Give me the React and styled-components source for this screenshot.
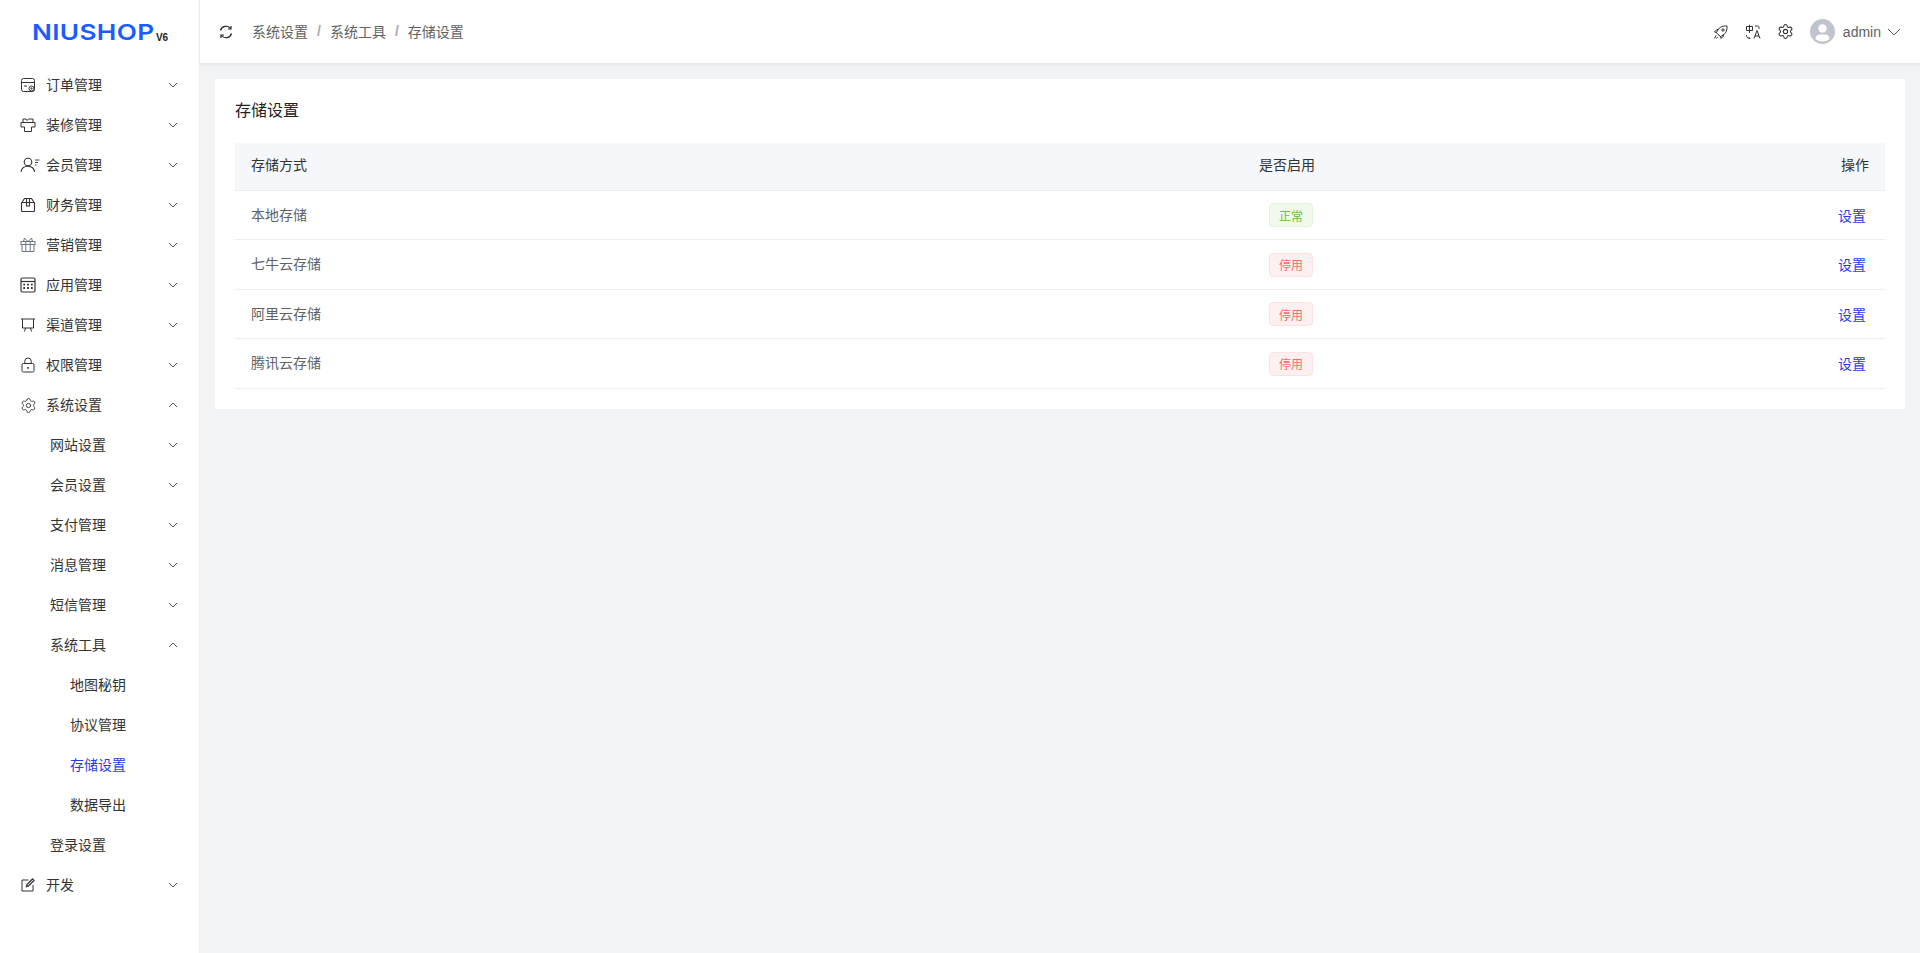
import React from 'react'
import styled, { createGlobalStyle } from 'styled-components'
import { Settings } from 'lucide-react'

const GlobalStyle = createGlobalStyle`
  html, body {
    margin: 0;
    padding: 0;
    height: 100%;
    background: #f2f3f5;
    font-family: "Liberation Sans", "Noto Sans CJK SC", sans-serif;
    font-size: 14px;
  }
`

const Svg = ({ size = 16, children, ...rest }) => (
  <svg width={size} height={size} viewBox="0 0 16 16" fill="none" stroke="currentColor" strokeWidth="1" {...rest}>
    {children}
  </svg>
)

const OrderIcon = () => (
  <Svg>
    <rect x="1.500" y="1.500" width="13" height="13" rx="2" />
    <path d="M1.500 5.500h13M4 9h3" />
    <circle cx="11.500" cy="11.500" r="2.500" fill="#fff" />
    <circle cx="11.500" cy="11.500" r=".7" />
  </Svg>
)
const DecorateIcon = () => (
  <Svg>
    <path d="M3 5.500V2h3l1 1.500L8.500 2H13v3.500" />
    <path d="M1 5.500h14V10h-3.500v4.500h-7V10H1z" strokeLinejoin="round" />
  </Svg>
)
const MemberIcon = () => (
  <svg width="20" height="16" viewBox="0 0 20 16" fill="none" stroke="currentColor" strokeWidth="1.100">
    <circle cx="8" cy="5" r="3.800" />
    <path d="M1 15c.5-3.600 3.300-5.800 7-5.800 1.800 0 3.500.6 4.800 1.800.9.900 1.500 2.300 1.800 4" />
    <path d="M15 3h4.500M15 5.500h3M15 8h1.500" strokeWidth=".9" />
  </svg>
)
const FinanceIcon = () => (
  <Svg strokeWidth="1.100">
    <rect x="1.500" y="5.500" width="13" height="9" rx="1" />
    <path d="M1.500 6 4.500 1.500h7L14.500 6M6.500 1.500V9h3V1.500" />
  </Svg>
)
const GiftIcon = () => (
  <GiftSvg>
    <rect x="1" y="4.500" width="14" height="3" />
    <path d="M2 7.500v7h12v-7M5.800 4.500v10M10.200 4.500v10M8 4.500 4.500 1 3.500 4.500M8 4.500 11.500 1l1 3.500" />
  </GiftSvg>
)
const AppIcon = () => (
  <Svg strokeWidth="1.200">
    <rect x="1" y="1" width="14" height="14" rx="1.500" />
    <path d="M1 4.500h14" />
    <path d="M3.300 7.700h1.800M7.100 7.700h1.800M10.900 7.700h1.800M3.300 11h1.800M7.100 11h1.800M10.900 11h1.800" strokeWidth="1.800" />
  </Svg>
)
const ChannelIcon = () => (
  <Svg>
    <path d="M.8 2h14.400M2.500 2v9h11V2M5.500 11l-1 3.500M10.500 11l1 3.500" />
  </Svg>
)
const LockIcon = () => (
  <Svg>
    <rect x="2" y="6.500" width="12" height="8.500" rx="1.500" />
    <path d="M4.800 6.500V4.200a3.200 3.200 0 0 1 6.400 0v2.300" />
    <path d="M8 10v1.800" strokeWidth="1.600" />
  </Svg>
)
const EditIcon = () => (
  <Svg>
    <path d="M13 8v6H2V3h6.500" />
    <path d="M6.500 9.500 7 7.500 12.500 2l1.500 1.500L8.500 9z" strokeWidth="1.300" />
  </Svg>
)
const RefreshIcon = () => (
  <Svg strokeWidth="1.200">
    <path d="M2.500 6.500A5.700 5.700 0 0 1 12.500 4.500M13.500 9.500A5.700 5.700 0 0 1 3.500 11.500" />
    <path d="M13 2v3h-3M3 14v-3h3" />
  </Svg>
)
const RocketIcon = () => (
  <Svg>
    <path d="M5 10.500 3.500 8.500C5 4 9 1.500 14 2c.5 5-2 9-6.500 10.500zM3.500 8.500 1.500 8 4 5.500l2 .2M7.500 12.500l.5 2 2.500-2.500-.2-2" />
    <circle cx="10" cy="6" r="1.200" />
    <path d="M3 11.500 1.500 14.500M4.500 13l-1 1.500" />
  </Svg>
)
const LangIcon = () => (
  <Svg>
    <path d="M1.500 2.500h6v4h-6zM4.500.8v8M1.500 11c0 2 1 3.500 3.500 3.500M3.500 13l1.500 1.500" />
    <path d="M9 14.500 12 6.500l3 8M10 12h4M10 2h2.500c1 0 1.500.5 1.500 1.500V5" />
  </Svg>
)
const Chevron = ({ up, size = 12 }) => (
  <ChevronSvg width={size} height={size} viewBox="0 0 12 12" fill="none" stroke="currentColor" strokeWidth={12 / size}>
    <path d={up ? 'M2 8 6 4l4 4' : 'M2 4l4 4 4-4'} />
  </ChevronSvg>
)

const menu = [
  { label: '订单管理', icon: <OrderIcon />, arrow: 'down' },
  { label: '装修管理', icon: <DecorateIcon />, arrow: 'down' },
  { label: '会员管理', icon: <MemberIcon />, arrow: 'down' },
  { label: '财务管理', icon: <FinanceIcon />, arrow: 'down' },
  { label: '营销管理', icon: <GiftIcon />, arrow: 'down' },
  { label: '应用管理', icon: <AppIcon />, arrow: 'down' },
  { label: '渠道管理', icon: <ChannelIcon />, arrow: 'down' },
  { label: '权限管理', icon: <LockIcon />, arrow: 'down' },
  { label: '系统设置', icon: <Settings size={17} strokeWidth={1.3} />, arrow: 'up' },
  { label: '网站设置', level: 2, arrow: 'down' },
  { label: '会员设置', level: 2, arrow: 'down' },
  { label: '支付管理', level: 2, arrow: 'down' },
  { label: '消息管理', level: 2, arrow: 'down' },
  { label: '短信管理', level: 2, arrow: 'down' },
  { label: '系统工具', level: 2, arrow: 'up' },
  { label: '地图秘钥', level: 3 },
  { label: '协议管理', level: 3 },
  { label: '存储设置', level: 3, active: true },
  { label: '数据导出', level: 3 },
  { label: '登录设置', level: 2 },
  { label: '开发', icon: <EditIcon />, arrow: 'down' },
]

const storages = [
  { name: '本地存储', on: true },
  { name: '七牛云存储', on: false },
  { name: '阿里云存储', on: false },
  { name: '腾讯云存储', on: false },
]

const App = () => (
  <Layout>
    <GlobalStyle />
    <Sidebar>
      <Logo>
        <LogoWord>NIUSHOP</LogoWord>
        <LogoVersion>V6</LogoVersion>
      </Logo>
      <nav>
        {menu.map((item) => (
          <MenuRow key={item.label + (item.level || 1)} $level={item.level || 1} $active={item.active}>
            {item.icon && <MenuIcon>{item.icon}</MenuIcon>}
            <MenuLabel>{item.label}</MenuLabel>
            {item.arrow && <Chevron up={item.arrow === 'up'} />}
          </MenuRow>
        ))}
      </nav>
    </Sidebar>
    <Main>
      <Header>
        <Breadcrumb>
          <RefreshButton><RefreshIcon /></RefreshButton>
          <Crumb>系统设置</Crumb>
          <Slash>/</Slash>
          <Crumb>系统工具</Crumb>
          <Slash>/</Slash>
          <Crumb>存储设置</Crumb>
        </Breadcrumb>
        <Tools>
          <ToolIcon><RocketIcon /></ToolIcon>
          <ToolIcon><LangIcon /></ToolIcon>
          <ToolIcon><Settings size={17} strokeWidth={1.5} /></ToolIcon>
          <Avatar>
            <svg width="25" height="25" viewBox="0 0 25 25">
              <circle cx="12.500" cy="12.500" r="12.500" fill="#c0c4cc" />
              <circle cx="12.500" cy="9.500" r="4.200" fill="#fff" />
              <path d="M5.500 20c0-3 2-4.500 4-4.500h6c2 0 4 1.500 4 4.500-2 1.700-4.500 2.500-7 2.500s-5-.8-7-2.500z" fill="#fff" />
            </svg>
          </Avatar>
          <UserName>admin</UserName>
          <UserChevron><Chevron size={18} /></UserChevron>
        </Tools>
      </Header>
      <Content>
        <Card>
          <CardTitle>存储设置</CardTitle>
          <HeadRow>
            <span>存储方式</span>
            <CenterCell>是否启用</CenterCell>
            <RightCell>操作</RightCell>
          </HeadRow>
          {storages.map((s) => (
            <BodyRow key={s.name}>
              <NameCell>{s.name}</NameCell>
              <CenterCell><Tag $on={s.on}>{s.on ? '正常' : '停用'}</Tag></CenterCell>
              <ActionCell><ActionLink>设置</ActionLink></ActionCell>
            </BodyRow>
          ))}
        </Card>
      </Content>
    </Main>
  </Layout>
)

const Layout = styled.div`
  display: flex;
  min-height: 953px;
`

const Sidebar = styled.aside`
  width: 200px;
  flex-shrink: 0;
  box-sizing: border-box;
  background: #fff;
  border-right: 1px solid #eef1f7;
`

const Logo = styled.div`
  height: 65px;
  display: flex;
  align-items: flex-start;
  padding: 21px 0 0 32px;
  box-sizing: border-box;
`

const LogoWord = styled.span`
  font-family: Inter, sans-serif;
  font-weight: 600;
  font-size: 22px;
  line-height: 23px;
  letter-spacing: 0.3px;
  color: #1a5cff;
  transform: scaleX(1.19);
  transform-origin: left center;
`

const LogoVersion = styled.span`
  font-family: "Liberation Sans", sans-serif;
  font-weight: 700;
  font-size: 10px;
  line-height: 12px;
  margin: 11px 0 0 21px;
  color: #222;
`

const levelPadding = { 1: 21, 2: 50, 3: 70 }

const MenuRow = styled.div`
  height: 40px;
  display: flex;
  align-items: center;
  padding: 0 20px 0 ${(p) => levelPadding[p.$level]}px;
  color: ${(p) => (p.$active ? '#273ce2' : '#333')};
  box-sizing: border-box;
`

const MenuIcon = styled.span`
  width: 26px;
  height: 16px;
  margin-left: -1px;
  display: flex;
  flex-shrink: 0;
  color: #333;
`

const GiftSvg = styled(Svg)`
  color: #6f7683;
`

const MenuLabel = styled.span`
  flex: 1;
  line-height: 16px;
`

const ChevronSvg = styled.svg`
  color: #555;
  flex-shrink: 0;
`

const Main = styled.div`
  flex: 1;
  min-width: 0;
  display: flex;
  flex-direction: column;
`

const Header = styled.header`
  height: 63px;
  background: #fff;
  display: flex;
  align-items: center;
  justify-content: space-between;
  padding: 0 20px 0 18px;
  box-shadow: 0 1px 4px rgba(0, 21, 41, 0.08);
  box-sizing: border-box;
`

const Breadcrumb = styled.div`
  display: flex;
  align-items: center;
`

const RefreshButton = styled.span`
  display: flex;
  color: #222;
  margin-right: 18px;
`

const Crumb = styled.span`
  color: #606266;
  padding-bottom: 2px;
`

const Slash = styled.span`
  color: #a8abb2;
  margin: 0 9px;
  font-weight: 700;
  padding-bottom: 2px;
`

const Tools = styled.div`
  display: flex;
  align-items: center;
`

const ToolIcon = styled.span`
  display: flex;
  color: #333;
  margin-right: 16px;
`

const Avatar = styled.span`
  display: flex;
`

const UserName = styled.span`
  color: #606266;
  margin-left: 8px;
`

const UserChevron = styled.span`
  display: flex;
  margin: 0 -3px 0 4px;
`

const Content = styled.main`
  padding: 16px 15px;
`

const Card = styled.section`
  background: #fff;
  padding: 20px;
`

const CardTitle = styled.h2`
  margin: 1px 0 22px;
  font-size: 16px;
  font-weight: 400;
  line-height: 21px;
  color: #222;
`

const HeadRow = styled.div`
  display: grid;
  grid-template-columns: 705px 694px 1fr;
  align-items: center;
  height: 47.75px;
  padding: 0 16px 4px;
  box-sizing: border-box;
  background: #f5f7fa;
  border-bottom: 1px solid #ebeef5;
  color: #333;
`

const BodyRow = styled.div`
  display: grid;
  grid-template-columns: 705px 694px 1fr;
  align-items: center;
  height: 49.5px;
  padding: 0 16px;
  box-sizing: border-box;
  border-bottom: 1px solid #ebeef5;
  color: #606266;
`

const NameCell = styled.span`
  padding-bottom: 3px;
`

const CenterCell = styled.span`
  justify-self: center;
  display: flex;
  margin-left: -32px;
`

const RightCell = styled.span`
  justify-self: end;
`

const ActionCell = styled(RightCell)`
  padding-bottom: 1px;
`

const Tag = styled.span`
  height: 24px;
  box-sizing: border-box;
  padding: 0 9px;
  margin-left: 8px;
  display: inline-flex;
  align-items: center;
  font-size: 12px;
  border-radius: 4px;
  border: 1px solid ${(p) => (p.$on ? '#e1f3d8' : '#fde2e2')};
  background: ${(p) => (p.$on ? '#f0f9eb' : '#fef0f0')};
  color: ${(p) => (p.$on ? '#67c23a' : '#f56c6c')};
`

const ActionLink = styled.a`
  color: #273ce2;
  margin-right: 3px;
  cursor: pointer;
`

export default App
